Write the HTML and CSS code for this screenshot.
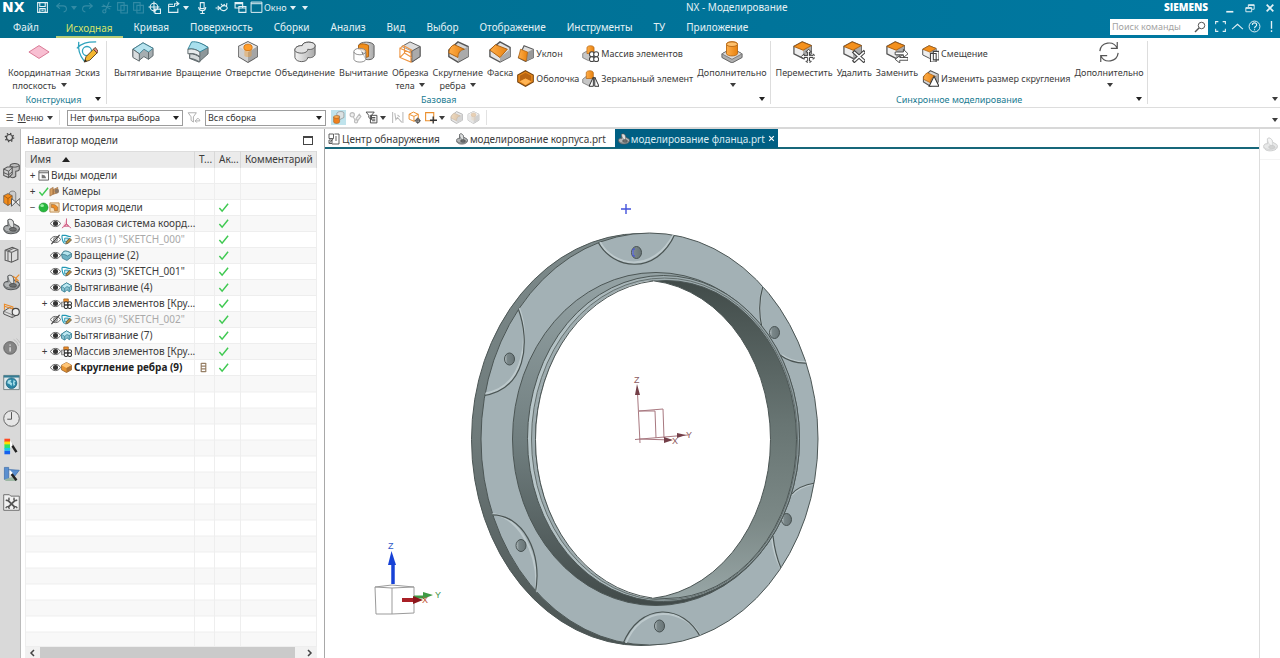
FILE: index.html
```html
<!DOCTYPE html>
<html lang="ru">
<head>
<meta charset="utf-8">
<title>NX - Моделирование</title>
<link rel="stylesheet" href="styles.css">
</head>
<body>
<svg class="sprite" aria-hidden="true">
  <linearGradient id="g-or" x1="0" x2="1"><stop offset="0" stop-color="#ffae4a"/><stop offset="1" stop-color="#e8820f"/></linearGradient>
  <linearGradient id="g-gr" x1="0" x2="1"><stop offset="0" stop-color="#f4f4f4"/><stop offset="1" stop-color="#a9a9a9"/></linearGradient>
  <symbol id="plane" viewBox="0 0 24 24"><path d="M1 12 12 5l11 7-11 7z" fill="#f8bfd2" stroke="#d5738f"/></symbol>
  <symbol id="sketch" viewBox="0 0 24 24"><path d="M1 8C6 2 12 1 22 1M3 1c-1 7 1 15 6 21" fill="none" stroke="#2fa3bd" stroke-width="1.4"/><circle cx="12" cy="11" r="5" fill="none" stroke="#2fa3bd" stroke-width="1.4"/><path d="m9 23 2-6 8-8 4 4-8 8z" fill="#f4b62f" stroke="#5b4320"/><path d="m19 9 2-2 3 4-1 2z" fill="#e88" stroke="#5b4320"/><path d="m9 23 1-3 2 2z" fill="#222"/></symbol>
  <symbol id="extrude" viewBox="0 0 24 24"><path d="M1 9 12 2l11 6v8l-5 4-5-3-5 4-7-4z" fill="#a5adb0" stroke="#596266"/><path d="M1 9 12 2l11 6-5 4-5-3-5 5z" fill="#b8e4ef" stroke="#3d7e90"/><path d="M1 9v9l7 4v-8z" fill="#d9dddf" stroke="#596266"/><path d="M18 12v8" stroke="#596266"/></symbol>
  <symbol id="revolve" viewBox="0 0 24 24"><path d="M5 2c6-1 12 1 18 5v7L13 23 3 19v-4l5-1z" fill="#8d979a" stroke="#566064"/><path d="M5 1c6-1 12 2 18 6l-9 5C10 9 5 8 1 9z" fill="#a8dfed" stroke="#2c7f96"/><path d="M1 9c5-1 9 0 13 3v5C10 14 6 13 1 14z" fill="#e7ebec" stroke="#566064"/><path d="M3 14c4 0 8 1 11 4v5c-3-2-7-4-11-4z" fill="#d4d9da" stroke="#566064"/></symbol>
  <symbol id="cube" viewBox="0 0 24 24"><path d="m12 1 10 5v11l-10 6-10-6V6z" fill="#eee" stroke="#5a5a5a" stroke-width="1.6"/><path class="cube-t" d="m12 1 10 5-10 6L2 6z"/><path class="cube-l" d="m2 6 10 6v11L2 17z"/><path class="cube-r" d="m22 6-10 6v11l10-6z"/></symbol>
  <symbol id="hole" viewBox="0 0 24 24"><use href="#cube"/><path d="M8 7v9c1 2 7 2 8 0V7z" fill="#f59a2b" opacity=".4"/><ellipse cx="12" cy="7" rx="4.500" ry="3.500" fill="#ff9d2a" stroke="#d47410"/></symbol>
  <symbol id="unite" viewBox="0 0 24 24"><path d="M9 5c0-5 14-5 14 0v9c0 3-4 5-8 4 0 6-13 6-14 0V10c0-3 3-5 8-5z" fill="url(#g-gr)" stroke="#555"/><path d="M9 5c0-5 14-5 14 0 0 3-4 5-8 4 0 6-14 5-14 1 0-3 3-5 8-5z" fill="#e2e2e2" stroke="#555"/></symbol>
  <symbol id="subtract" viewBox="0 0 24 24"><path d="M6 5c1-5 16-5 17 0v11c0 4-5 5-9 4z" fill="url(#g-gr)" stroke="#555"/><path d="M6 5c2-3 8-2 11 0v12l-3 1v-3c0-5-3-6-8-6z" fill="#f28f1c" stroke="#a85c0c"/><path d="M1 11c1-4 12-4 13 0v9c-1 4-12 4-13 0zM1 12c1 4 12 4 13 0" fill="#fff" fill-opacity=".65" stroke="#888"/></symbol>
  <symbol id="trim" viewBox="0 0 24 24"><path d="m12 1 11 5v11l-9 6V11L3 6z" fill="#ddd" stroke="#555"/><path d="M23 6v11l-9 6V11z" fill="#aaa" stroke="#555"/><path d="m1 8 12 5v10L1 18zM1 8l4-3 9 5-3 3M1 18l5-5 8 5M6 6v8" fill="#fff" fill-opacity=".35" stroke="#ee9440" stroke-width="1.200"/></symbol>
  <symbol id="blend" viewBox="0 0 24 24"><path d="m12 1 11 5v11l-11 6-10-6V10z" fill="#d5d5d5" stroke="#555" stroke-width="1.500"/><path d="m13 12 10-6v11l-11 6z" fill="#aaa"/><path d="M2 13C2 8 5 5 8 4l11 5c-5 1-7 4-7 9z" fill="url(#g-or)" stroke="#a85c0c"/></symbol>
  <symbol id="chamfer" viewBox="0 0 24 24"><path d="m12 1 11 6v10l-11 6-11-6v-7z" fill="#e2e2e2" stroke="#555" stroke-width="1.500"/><path d="m12 18 11-9v8l-11 6z" fill="#aaa"/><path d="m1 10 6-6 13 5-8 9z" fill="url(#g-or)" stroke="#a85c0c"/></symbol>
  <symbol id="draft" viewBox="0 0 24 24"><path d="m10 1 13 5v12l-11 5-10-5z" fill="#ddd" stroke="#555" stroke-width="1.500"/><path d="m15 10 8-4v12l-10 5z" fill="#999"/><path d="m5 6 10 4-2 13-11-5z" fill="url(#g-or)" stroke="#a85c0c"/></symbol>
  <symbol id="shell" viewBox="0 0 24 24"><path d="m12 1 11 6v10l-11 6-11-6V7z" fill="#e8891a" stroke="#764411" stroke-width="1.500"/><path d="m12 4 8 4v8l-8-4-8 4V8z" fill="#b96512"/><path d="m4 16 8-4 8 4-8 5z" fill="#ffb455"/></symbol>
  <symbol id="pattern" viewBox="0 0 24 24"><path d="M1 12l5-3h9v8l-6 5-8-4z" fill="#c6c6c6" stroke="#666"/><path d="M7 4c0-4 10-4 10 0v8H7z" fill="url(#g-or)" stroke="#b46413"/><g fill="#fff" stroke="#444" stroke-width="1.500"><circle cx="14" cy="13" r="3.500"/><circle cx="20" cy="13" r="3.500"/><circle cx="14" cy="20" r="3.500"/><circle cx="20" cy="20" r="3.500"/></g></symbol>
  <symbol id="mirror" viewBox="0 0 24 24"><path d="M1 13l5-4h9v8l-6 5-8-4z" fill="#c6c6c6" stroke="#666"/><path d="M6 4c0-4 10-4 10 0v8H6z" fill="url(#g-or)" stroke="#b46413"/><path d="m16 10-6 13h6zm2 0 6 13h-6z" fill="#fff" stroke="#333" stroke-width="1.400"/></symbol>
  <symbol id="boss" viewBox="0 0 24 24"><path d="m1 14 11-6 11 6v4l-11 6-11-6z" fill="#aeaeae" stroke="#5b5b5b"/><path d="m1 14 11-6 11 6-11 6z" fill="#dcdcdc" stroke="#777"/><path d="M6 3c1-3 11-3 12 0v11c-1 3-11 3-12 0z" fill="url(#g-or)" stroke="#b96a16"/><ellipse cx="12" cy="3.500" rx="6" ry="2.500" fill="#ffc06b" stroke="#b96a16"/></symbol>
  <symbol id="orbox" viewBox="0 0 24 24"><path d="m10 1 10 4v9l-9 5-10-5V6z" fill="#eee" stroke="#555" stroke-width="1.400"/><path d="m11 10 9-5v9l-9 5z" fill="#aaa"/><path d="m10 1 10 4-9 5L1 6z" fill="#f4911e" stroke="#a85c0c"/></symbol>
  <symbol id="move" viewBox="0 0 24 24"><use href="#orbox"/><path d="m17 9 3 3h-2v4h4v-2l3 3-3 3v-2h-4v4h2l-3 3-3-3h2v-4h-4v2l-3-3 3-3v2h4v-4h-2z" fill="#fff" stroke="#333"/></symbol>
  <symbol id="delete" viewBox="0 0 24 24"><use href="#orbox"/><path d="m11 11 13 12M24 11 11 23" stroke="#444" stroke-width="4"/><path d="m12 12 11 10M23 12 12 22" stroke="#fff" stroke-width="1.800"/></symbol>
  <symbol id="replace" viewBox="0 0 24 24"><use href="#orbox"/><path d="M10 12h9V9l5 5-5 4v-3h-9zM24 18h-9v-2l-5 4 5 4v-3h9z" fill="#fff" stroke="#444"/></symbol>
  <symbol id="offset" viewBox="0 0 24 24"><use href="#orbox"/><path d="M16 9h8v12h-8zM12 12h8v12h-8z" fill="#fff" stroke="#444" stroke-width="1.500"/></symbol>
  <symbol id="resize" viewBox="0 0 24 24"><use href="#blend"/><path d="m17 9-7 14h14z" fill="#fff" stroke="#333" stroke-width="1.500"/></symbol>
  <symbol id="refresh" viewBox="0 0 24 24"><path d="M2 11A10 10 0 0 1 21 8M22 13a10 10 0 0 1-19 3M21 1v7h-7M3 23v-7h7" fill="none" stroke="#555" stroke-width="1.300"/></symbol>
  <symbol id="part" viewBox="0 0 24 24"><path d="M7 3c3-3 8 0 8 5l7 4c3 4 0 9-8 10C7 23 1 20 1 15c0-3 3-5 6-4z" fill="#b1b4b5" stroke="#535658" stroke-width="1.500"/><path d="M7 3c3-3 8 0 8 5v6c-4 0-7-4-8-11z" fill="#dfe1e1" stroke="#535658"/><ellipse cx="14" cy="16" rx="5" ry="2.600" fill="#6d7071" stroke="#444"/><path d="M1 16c3 5 17 6 22-1" fill="none" stroke="#535658"/></symbol>
  <symbol id="asm" viewBox="0 0 24 24"><path d="M10 5c1-4 12-4 13 0v5c0 2-3 3-5 3v7c-2 3-7 3-8 0z" fill="#bdbdbd" stroke="#555" stroke-width="1.500"/><path d="m1 10 5-3h7v10l-5 5-7-3z" fill="#cfcfcf" stroke="#555" stroke-width="1.500"/><path d="m1 10 7 3 5-5M8 13v9M1 15l7 3 5-4M10 5c2 3 10 3 13 0" fill="none" stroke="#555" stroke-width="1.400"/></symbol>
  <symbol id="constraint" viewBox="0 0 24 24"><path d="M9 4c2-4 9-3 9 1v12H9z" fill="#ccc" stroke="#666"/><path d="m1 8 6-3 6 3v10l-6 4-6-4z" fill="#f18b1b" stroke="#555"/><path d="m1 8 6 4v10M7 12l6-4" fill="none" stroke="#944f0d"/><path d="m12 12 6 5-6 6zm12 0-6 5 6 6z" fill="#eee" stroke="#555" stroke-width="1.400"/></symbol>
  <symbol id="box3" viewBox="0 0 24 24"><path d="m3 6 10-4 8 3v14l-9 4-9-3z" fill="#ddd" stroke="#555" stroke-width="1.500"/><path d="m3 6 9 3 9-4M12 9v14M7 7l9-4M7 8v13" fill="none" stroke="#666" stroke-width="1.500"/></symbol>
  <symbol id="reuse" viewBox="0 0 24 24"><use href="#part"/><path d="m14 3 4 3 5-5M18 6l4 4M18 6v6" fill="none" stroke="#eb8b28" stroke-width="1.600"/></symbol>
  <symbol id="view" viewBox="0 0 24 24"><path d="m1 13 8-5 13 4v5l-9 5-12-5z" fill="#ddd" stroke="#555" stroke-width="1.400"/><path d="m1 13 12 5v4M13 18l9-6" fill="none" stroke="#666"/><path d="M2 11V3l12 4v5M2 6l12 4" fill="none" stroke="#eb8b28" stroke-width="1.500"/><circle cx="18" cy="14" r="5" fill="#eee" stroke="#444" stroke-width="1.600"/></symbol>
  <symbol id="info" viewBox="0 0 24 24"><circle cx="10" cy="14" r="9" fill="#858585" stroke="#555"/><path d="M10 9v2m0 2v6" stroke="#ddd" stroke-width="2"/><path d="M15 2a13 13 0 0 1 7 9M19 1a15 15 0 0 1 5 6" fill="none" stroke="#bbb" stroke-width="1.400"/></symbol>
  <symbol id="web" viewBox="0 0 24 24"><path d="M1 2h22v20H1z" fill="#dfe9ec" stroke="#566"/><path d="M1 2h22v3H1z" fill="#357c94"/><circle cx="12" cy="13" r="7.500" fill="#2b86a5" stroke="#155c76"/><path d="m7 9 4-1 1 2-2 1 3 2-1 4-3-3-3-1zm8-1 3 3-2 1 1 3-2 2-1-4z" fill="#a6dfe9"/></symbol>
  <symbol id="clock" viewBox="0 0 24 24"><circle cx="12" cy="12" r="11" fill="#e6e6e6" stroke="#666" stroke-width="1.400"/><path d="M12 3v10H6" fill="none" stroke="#555" stroke-width="1.400"/></symbol>
  <symbol id="palette" viewBox="0 0 24 24"><path d="M2 1h8v5H2z" fill="#ff4a22"/><path d="M2 5h8v5H2z" fill="#ffdf00"/><path d="M2 9h8v6H2z" fill="#2fe36a"/><path d="M2 14h8v4H2z" fill="#16c9ee"/><path d="M2 18h8v5H2z" fill="#1560ed"/><path d="m12 9 7 11" stroke="#222" stroke-width="3.500"/><path d="m10 3 4 7-4 4z" fill="#fff"/></symbol>
  <symbol id="scene" viewBox="0 0 24 24"><path d="M2 2h6v17H2zM8 5l15 1-7 9z" fill="#5a8fd0" stroke="#3c6ca8"/><path d="m2 19 12-4 6 6H4z" fill="#9db7a4"/><path d="m11 10 8 10" stroke="#222" stroke-width="3.500"/><path d="m9 5 5 5-4 3z" fill="#fff"/></symbol>
  <symbol id="tools" viewBox="0 0 24 24"><path d="M1 3V1h8l2 2h12v20H1z" fill="#f2f2f2" stroke="#666" stroke-width="1.300"/><path d="m7 9 10 10M17 9 7 19" stroke="#555" stroke-width="2.600"/><path d="M4 8c3 3 6 0 4-3M20 8c-3 3-6 0-4-3M4 20c1-3 4-3 5 1M20 20c-1-3-4-3-5 1" fill="none" stroke="#555" stroke-width="2"/></symbol>
  <symbol id="gear" viewBox="0 0 24 24"><circle cx="12" cy="12" r="6.500" fill="none" stroke="#444" stroke-width="2.500"/><circle cx="12" cy="12" r="9" fill="none" stroke="#444" stroke-width="3" stroke-dasharray="3 4.070"/></symbol>
  <symbol id="eye" viewBox="0 0 24 24"><path d="M1 12c5-9 17-9 22 0-5 9-17 9-22 0z" fill="#fff" stroke="#444" stroke-width="1.800"/><circle cx="12" cy="12" r="5.500" fill="#333"/></symbol>
  <symbol id="eye-off" viewBox="0 0 24 24"><path d="M1 12c5-9 17-9 22 0-5 9-17 9-22 0z" fill="none" stroke="#555" stroke-width="2"/><circle cx="12" cy="12" r="4" fill="none" stroke="#555" stroke-width="2"/><path d="M3 22 21 2" stroke="#444" stroke-width="2.500"/></symbol>
  <symbol id="csys" viewBox="0 0 24 24"><path d="M12 1v13L2 22m10-8 10 8M7 18l5-6 5 6z" fill="#f6cdd7" stroke="#ce5d83" stroke-width="2"/></symbol>
  <symbol id="mini-sketch" viewBox="0 0 24 24"><path d="M2 3h8M2 3c0 8 2 14 6 18M10 3c5 2 8 3 12 3" fill="none" stroke="#2298b4" stroke-width="2.500"/><path d="M8 9h8v8H8z" fill="#c9ecf2" stroke="#2298b4" stroke-width="2"/><path d="m10 22 2-6 7-7 4 4-7 7z" fill="#b98d38" stroke="#444" stroke-width="1.500"/></symbol>
  <symbol id="mini-revolve" viewBox="0 0 24 24"><path d="M6 3c6-2 12 1 17 5v7l-10 8-10-5-2-8z" fill="#6fb2c4" stroke="#2f6f81" stroke-width="1.500"/><path d="M6 3c6-2 12 1 17 5l-9 5C10 10 6 9 1 10z" fill="#b7e5ee" stroke="#2f6f81" stroke-width="1.500"/></symbol>
  <symbol id="mini-extrude" viewBox="0 0 24 24"><path d="M1 9 12 2l11 6v9l-5 4-5-4-5 5-7-4z" fill="#8cc3d1" stroke="#2f7c92" stroke-width="1.800"/><path d="M1 9 12 2l11 6-5 4-5-2-5 4z" fill="#bfe9f2" stroke="#2f7c92" stroke-width="1.500"/><path d="M8 14v8M18 12v9" stroke="#2f7c92" stroke-width="1.500"/></symbol>
  <symbol id="mini-pattern" viewBox="0 0 24 24"><path d="M6 2h10v9H6z" fill="#ef8f2c" stroke="#9c5614" stroke-width="1.500"/><path d="M1 9h8v10H1z" fill="#ccc" stroke="#666" stroke-width="1.500"/><g fill="#fff" stroke="#333" stroke-width="2.200"><circle cx="11" cy="12" r="4"/><circle cx="19" cy="12" r="4"/><circle cx="11" cy="19" r="4"/><circle cx="19" cy="19" r="4"/></g></symbol>
  <symbol id="tick" viewBox="0 0 24 24"><path d="m3 13 6 7L22 4" fill="none" stroke="#3fc951" stroke-width="3.200"/></symbol>
  <symbol id="views" viewBox="0 0 24 24"><path d="M2 2h21v20H2zM2 6h21" fill="#fff" stroke="#555" stroke-width="2"/><path d="M8 18v-8l7 2 3 6z" fill="#777"/></symbol>
  <symbol id="camera" viewBox="0 0 24 24"><path d="m2 7 7-4v15l-7 4zM9 8l10-5v12L9 18z" fill="#d9a162" stroke="#996b40" stroke-width="1.500"/><circle cx="17" cy="11" r="5" fill="#8c7867"/></symbol>
  <symbol id="history" viewBox="0 0 24 24"><path d="M2 2h20v20H2z" fill="#f8e1bd" stroke="#bc8a4b" stroke-width="2"/><path d="m5 5 8 1 6 5v8h-7l-1-6-6-1z" fill="#ee8d24" stroke="#7b5330"/></symbol>
  <symbol id="ball" viewBox="0 0 24 24"><circle cx="12" cy="12" r="10" fill="#27b83d" stroke="#168127"/><ellipse cx="9" cy="8" rx="4" ry="3" fill="#9cf3a4"/></symbol>
  <symbol id="orcube" viewBox="0 0 24 24"><path d="m12 1 11 6v10l-11 6-11-6V7z" fill="#e8942f" stroke="#8a551e" stroke-width="1.500"/><path d="m1 7 11 6 11-6-11-6z" fill="#ffc679"/><path d="M12 13v10l11-6V7z" fill="#ae7335"/></symbol>
  <symbol id="ladder" viewBox="0 0 24 24"><path d="M7 2v20M17 2v20M7 3h10M7 9h10M7 15h10M7 21h10" fill="none" stroke="#967f65" stroke-width="2.500"/></symbol>
  <symbol id="save" viewBox="0 0 24 24"><path d="M3 3h18v18H3zM7 3v7h10V3M7 21v-7h10v7M10 17h4" fill="none" stroke="currentColor" stroke-width="2"/></symbol>
  <symbol id="undo" viewBox="0 0 24 24"><path d="M9 4 3 9l6 5M3 9h12c8 0 8 11 1 11" fill="none" stroke="currentColor" stroke-width="2"/></symbol>
  <symbol id="redo" viewBox="0 0 24 24"><path d="m15 4 6 5-6 5M21 9H9C1 9 1 20 8 20" fill="none" stroke="currentColor" stroke-width="2"/></symbol>
  <symbol id="cut" viewBox="0 0 24 24"><path d="m17 2-7 15M3 10h18M5 7l14 8" fill="none" stroke="currentColor" stroke-width="2"/><circle cx="8" cy="19" r="3" fill="none" stroke="currentColor" stroke-width="2"/></symbol>
  <symbol id="copy" viewBox="0 0 24 24"><path d="M3 3h12v14H3zM9 8h12v14H9z" fill="none" stroke="currentColor" stroke-width="2"/></symbol>
  <symbol id="target" viewBox="0 0 24 24"><path d="M11 1v20M1 11h20M13 15h10v8H13z" fill="none" stroke="currentColor" stroke-width="2"/><circle cx="11" cy="11" r="7" fill="none" stroke="currentColor" stroke-width="2"/></symbol>
  <symbol id="share" viewBox="0 0 24 24"><path d="M3 6h8M3 6v15h17v-7M3 10h11M14 10V5h7m-4-4 5 4-5 4" fill="none" stroke="currentColor" stroke-width="2"/></symbol>
  <symbol id="mic" viewBox="0 0 24 24"><path d="M8 3h7v11H8zM5 11c0 9 13 9 13 0M12 18v5M8 23h8" fill="none" stroke="currentColor" stroke-width="2"/></symbol>
  <symbol id="spin" viewBox="0 0 24 24"><path d="M1 13h7M5 9l4 4-4 4M11 16c-4-6 8-10 11-5s-7 9-11 5zM11 5l3 4 4-3M22 4l-1 7" fill="none" stroke="currentColor" stroke-width="2"/></symbol>
  <symbol id="wins" viewBox="0 0 24 24"><path d="M2 3h14v10H2zM2 5h14M9 10h13v11H9zM9 13h13" fill="none" stroke="currentColor" stroke-width="2"/></symbol>
  <symbol id="win" viewBox="0 0 24 24"><path d="M2 2h20v19H2zM2 5h20" fill="none" stroke="currentColor" stroke-width="1.800"/></symbol>
  <symbol id="min" viewBox="0 0 24 24"><path d="M3 21h17" stroke="currentColor" stroke-width="4"/></symbol>
  <symbol id="restore" viewBox="0 0 24 24"><path d="M2 11h14v10H2zM8 10V4h14v11h-5M2 13h14M8 6h14" fill="none" stroke="currentColor" stroke-width="2.200"/></symbol>
  <symbol id="close" viewBox="0 0 24 24"><path d="m4 4 16 16M20 4 4 20" stroke="currentColor" stroke-width="4"/></symbol>
  <symbol id="lens" viewBox="0 0 24 24"><circle cx="15" cy="9" r="6.500" fill="none" stroke="#555" stroke-width="2"/><path d="m10 14-8 8" stroke="#555" stroke-width="3"/></symbol>
  <symbol id="full" viewBox="0 0 24 24"><path d="M3 8V3h5M16 3h5v5M21 16v5h-5M8 21H3v-5" fill="none" stroke="currentColor" stroke-width="2"/></symbol>
  <symbol id="up" viewBox="0 0 24 24"><path d="m2 17 10-9 10 9" fill="none" stroke="currentColor" stroke-width="2"/></symbol>
  <symbol id="help" viewBox="0 0 24 24"><circle cx="12" cy="12" r="10" fill="none" stroke="currentColor" stroke-width="1.800"/><path d="M8 9c0-5 8-5 8 0 0 3-4 3-4 6M12 17v2" fill="none" stroke="currentColor" stroke-width="2"/></symbol>
  <symbol id="bang" viewBox="0 0 24 24"><path d="M12 2v14M12 19v3" stroke="currentColor" stroke-width="2.500"/></symbol>
  <symbol id="funnel" viewBox="0 0 24 24"><path d="M2 3h14l-5 7v9l-4-3v-6zM14 17h8m-8 0 3-3m-3 3 3 3M22 17c0-4-3-4-5-4" fill="none" stroke="#aaa" stroke-width="1.600"/></symbol>
  <symbol id="solid" viewBox="0 0 24 24"><path d="M3 11h11v9c0 4-11 4-11 0z" fill="#f0801d" stroke="#9c5614"/><path d="M9 4c2-4 13-4 13 0v8l-8 4V9H9z" fill="#dce2e3" stroke="#777"/><ellipse cx="8.500" cy="11" rx="5.500" ry="2.500" fill="#ffb15a" stroke="#9c5614"/></symbol>
  <symbol id="chain" viewBox="0 0 24 24"><circle cx="6" cy="7" r="4" fill="#eee" stroke="#bbb" stroke-width="2"/><path d="m8 11 5 9M13 14l6-8 3 4-6 8z" fill="#eee" stroke="#bbb" stroke-width="2"/><circle cx="13" cy="19" r="3" fill="#eee" stroke="#bbb" stroke-width="2"/></symbol>
  <symbol id="filter" viewBox="0 0 24 24"><path d="M2 2h15l-5 6v8L7 12V8zM10 8h12v14H10zM13 12h6M13 15h6M13 18h6" fill="#fff" stroke="#444" stroke-width="1.700"/></symbol>
  <symbol id="arrowsel" viewBox="0 0 24 24"><path d="M3 2v20M22 2v20M7 4l2 12 3-4 8 9M12 7l4 4" fill="none" stroke="#bbb" stroke-width="2"/></symbol>
  <symbol id="boxsel" viewBox="0 0 24 24"><path d="m10 2 9 4v9l-8 4-9-4V6zM2 6l9 4 8-4M11 10v9" fill="#fff" stroke="#eb8e2b" stroke-width="1.800"/><circle cx="18" cy="18" r="3.500" fill="#eee" stroke="#555" stroke-width="2"/><path d="M18 12v12M12 18h12" stroke="#555" stroke-width="1.500"/></symbol>
  <symbol id="rectsel" viewBox="0 0 24 24"><path d="M3 3h15v15H3z" fill="#fff" stroke="#eb8e2b" stroke-width="2"/><path d="M17 10v13M11 17h13" stroke="#333" stroke-width="2.500"/></symbol>
  <symbol id="discover" viewBox="0 0 24 24"><path d="M2 2h9v9H2zM13 2h9v20H8" fill="#fff" stroke="#444" stroke-width="1.700"/><path d="m3 20 7-8M2 14h6v7H2zM16 6v10" fill="none" stroke="#444" stroke-width="1.700"/></symbol>
</svg>

<div class="app">
  <header class="top">
    <div class="titlebar">
      <strong class="nx">NX</strong>
      <div class="qat">
        <button aria-label="Сохранить"><svg><use href="#save"/></svg></button>
        <span class="dim gap"><button aria-label="Отменить"><svg><use href="#undo"/></svg></button><i class="caret"></i></span>
        <span class="dim"><button aria-label="Повторить"><svg><use href="#redo"/></svg></button></span>
        <span class="dim gap"><button aria-label="Вырезать"><svg><use href="#cut"/></svg></button><button aria-label="Копировать"><svg><use href="#copy"/></svg></button><button aria-label="Вставить"><svg><use href="#copy"/></svg></button></span>
        <button aria-label="Поворот"><svg><use href="#target"/></svg></button>
        <span class="gap"><button aria-label="Экспорт"><svg><use href="#share"/></svg></button><i class="caret"></i></span>
        <span class="gap"><button aria-label="Голос"><svg><use href="#mic"/></svg></button></span>
        <span class="gap"><button aria-label="Повтор команды"><svg><use href="#spin"/></svg></button></span>
        <span class="gap"><button aria-label="Переключить окно"><svg><use href="#wins"/></svg></button></span>
        <button class="window-btn"><svg><use href="#win"/></svg>Окно<i class="caret"></i></button>
        <i class="caret more"></i>
      </div>
      <div class="title">NX - Моделирование</div>
      <strong class="brand">SIEMENS</strong>
      <div class="winctl">
        <button aria-label="Свернуть"><svg><use href="#min"/></svg></button>
        <button aria-label="Восстановить"><svg><use href="#restore"/></svg></button>
        <button aria-label="Закрыть"><svg><use href="#close"/></svg></button>
      </div>
    </div>
    <nav class="menu">
      <a class="file" href="#">Файл</a><a class="active" href="#">Исходная</a><a href="#">Кривая</a><a href="#">Поверхность</a><a href="#">Сборки</a><a href="#">Анализ</a><a href="#">Вид</a><a href="#">Выбор</a><a href="#">Отображение</a><a href="#">Инструменты</a><a href="#">ТУ</a><a href="#">Приложение</a>
      <label class="search"><input type="text" placeholder="Поиск команды" aria-label="Поиск команды"><svg><use href="#lens"/></svg></label>
      <div class="menuctl">
        <button aria-label="Полный экран"><svg><use href="#full"/></svg></button>
        <button aria-label="Свернуть ленту"><svg><use href="#up"/></svg></button>
        <button aria-label="Справка"><svg><use href="#help"/></svg></button>
        <button aria-label="Уведомления"><svg><use href="#bang"/></svg></button>
      </div>
    </nav>
  </header>

  <section class="ribbon">
    <div class="group g1">
      <div class="tools">
        <button class="big"><svg><use href="#plane"/></svg>Координатная<span>плоскость <i class="caret"></i></span></button>
        <button class="big"><svg><use href="#sketch"/></svg>Эскиз</button>
      </div>
      <div class="gname">Конструкция<i class="caret"></i></div>
    </div>
    <div class="group g2">
      <div class="tools">
        <button class="big"><svg><use href="#extrude"/></svg>Вытягивание</button>
        <button class="big"><svg><use href="#revolve"/></svg>Вращение</button>
        <button class="big"><svg><use href="#hole"/></svg>Отверстие</button>
        <button class="big"><svg><use href="#unite"/></svg>Объединение</button>
        <button class="big"><svg><use href="#subtract"/></svg>Вычитание</button>
        <button class="big"><svg><use href="#trim"/></svg>Обрезка<span>тела <i class="caret"></i></span></button>
        <button class="big"><svg><use href="#blend"/></svg>Скругление<span>ребра <i class="caret"></i></span></button>
        <button class="big"><svg><use href="#chamfer"/></svg>Фаска</button>
        <div class="stack">
          <button class="small"><svg><use href="#draft"/></svg>Уклон</button>
          <button class="small"><svg><use href="#shell"/></svg>Оболочка</button>
        </div>
        <div class="stack">
          <button class="small"><svg><use href="#pattern"/></svg>Массив элементов</button>
          <button class="small"><svg><use href="#mirror"/></svg>Зеркальный элемент</button>
        </div>
        <button class="big wide"><svg><use href="#boss"/></svg>Дополнительно<span><i class="caret"></i></span></button>
      </div>
      <div class="gname">Базовая<i class="caret"></i></div>
    </div>
    <div class="group g3">
      <div class="tools">
        <button class="big"><svg><use href="#move"/></svg>Переместить</button>
        <button class="big"><svg><use href="#delete"/></svg>Удалить</button>
        <button class="big"><svg><use href="#replace"/></svg>Заменить</button>
        <div class="stack">
          <button class="small"><svg><use href="#offset"/></svg>Смещение</button>
          <button class="small"><svg><use href="#resize"/></svg>Изменить размер скругления</button>
        </div>
        <button class="big wide"><svg><use href="#refresh"/></svg>Дополнительно<span><i class="caret"></i></span></button>
      </div>
      <div class="gname">Синхронное моделирование<i class="caret"></i></div>
    </div>
    <div class="rest"><i class="caret"></i></div>
  </section>

  <div class="selbar">
    <button class="menubtn"><b class="burger">☰</b><span><u>М</u>еню</span><i class="caret"></i></button>
    <span class="drop f1"><select aria-label="Фильтр выбора"><option>Нет фильтра выбора</option></select><i class="caret"></i></span>
    <button aria-label="Сброс фильтра"><svg><use href="#funnel"/></svg></button>
    <span class="drop f2"><select aria-label="Область выбора"><option>Вся сборка</option></select><i class="caret"></i></span>
    <div class="seltools">
      <button class="on" aria-label="Тело"><svg><use href="#solid"/></svg></button>
      <button aria-label="Цепочка"><svg><use href="#chain"/></svg></button>
      <button class="dd" aria-label="Фильтр"><svg><use href="#filter"/></svg><i class="caret"></i></button>
      <button aria-label="Выделение"><svg><use href="#arrowsel"/></svg></button>
      <button aria-label="Грани"><svg><use href="#boxsel"/></svg></button>
      <button class="dd" aria-label="Рамка"><svg><use href="#rectsel"/></svg><i class="caret"></i></button>
      <button class="fade" aria-label="Скругления"><svg><use href="#blend"/></svg></button>
      <button class="fade" aria-label="Сечение"><svg><use href="#hole"/></svg></button>
    </div>
    <i class="caret end"></i>
  </div>

  <main class="work">
    <aside class="rail">
      <button class="gearbtn" aria-label="Настройки"><svg><use href="#gear"/></svg></button>
      <button aria-label="Сборка"><svg><use href="#asm"/></svg></button>
      <button aria-label="Ограничения"><svg><use href="#constraint"/></svg></button>
      <button class="cur" aria-label="Навигатор модели"><svg><use href="#part"/></svg></button>
      <button aria-label="Библиотека"><svg><use href="#box3"/></svg></button>
      <button aria-label="Повторное использование"><svg><use href="#reuse"/></svg></button>
      <button aria-label="Виды"><svg><use href="#view"/></svg></button>
      <button class="apart" aria-label="Инфо"><svg><use href="#info"/></svg></button>
      <button class="apart" aria-label="Браузер"><svg><use href="#web"/></svg></button>
      <button class="apart" aria-label="Журнал"><svg><use href="#clock"/></svg></button>
      <button aria-label="Материалы"><svg><use href="#palette"/></svg></button>
      <button aria-label="Сцены"><svg><use href="#scene"/></svg></button>
      <button aria-label="Инструменты"><svg><use href="#tools"/></svg></button>
    </aside>

    <section class="navigator">
      <h2>Навигатор модели<button aria-label="Развернуть"></button></h2>
      <table>
        <colgroup><col><col class="c-t"><col class="c-a"><col class="c-c"></colgroup>
        <thead><tr><th>Имя <i class="asc"></i></th><th>Т...</th><th>Ак...</th><th>Комментарий</th></tr></thead>
        <tbody>
          <tr><td><div class="n"><b>+</b><svg><use href="#views"/></svg>Виды модели</div></td><td></td><td></td><td></td></tr>
          <tr><td><div class="n"><b>+</b><svg><use href="#tick"/></svg><svg><use href="#camera"/></svg>Камеры</div></td><td></td><td></td><td></td></tr>
          <tr><td><div class="n"><b>−</b><svg><use href="#ball"/></svg><svg><use href="#history"/></svg>История модели</div></td><td></td><td><svg><use href="#tick"/></svg></td><td></td></tr>
          <tr><td><div class="n sub"><b></b><svg><use href="#eye"/></svg><svg><use href="#csys"/></svg>Базовая система коорд...</div></td><td></td><td><svg><use href="#tick"/></svg></td><td></td></tr>
          <tr><td><div class="n sub off"><b></b><svg><use href="#eye-off"/></svg><svg><use href="#mini-sketch"/></svg>Эскиз (1) "SKETCH_000"</div></td><td></td><td><svg><use href="#tick"/></svg></td><td></td></tr>
          <tr><td><div class="n sub"><b></b><svg><use href="#eye"/></svg><svg><use href="#mini-revolve"/></svg>Вращение (2)</div></td><td></td><td><svg><use href="#tick"/></svg></td><td></td></tr>
          <tr><td><div class="n sub"><b></b><svg><use href="#eye"/></svg><svg><use href="#mini-sketch"/></svg>Эскиз (3) "SKETCH_001"</div></td><td></td><td><svg><use href="#tick"/></svg></td><td></td></tr>
          <tr><td><div class="n sub"><b></b><svg><use href="#eye"/></svg><svg><use href="#mini-extrude"/></svg>Вытягивание (4)</div></td><td></td><td><svg><use href="#tick"/></svg></td><td></td></tr>
          <tr><td><div class="n sub"><b>+</b><svg><use href="#eye"/></svg><svg><use href="#mini-pattern"/></svg>Массив элементов [Кру...</div></td><td></td><td><svg><use href="#tick"/></svg></td><td></td></tr>
          <tr><td><div class="n sub off"><b></b><svg><use href="#eye-off"/></svg><svg><use href="#mini-sketch"/></svg>Эскиз (6) "SKETCH_002"</div></td><td></td><td><svg><use href="#tick"/></svg></td><td></td></tr>
          <tr><td><div class="n sub"><b></b><svg><use href="#eye"/></svg><svg><use href="#mini-extrude"/></svg>Вытягивание (7)</div></td><td></td><td><svg><use href="#tick"/></svg></td><td></td></tr>
          <tr><td><div class="n sub"><b>+</b><svg><use href="#eye"/></svg><svg><use href="#mini-pattern"/></svg>Массив элементов [Кру...</div></td><td></td><td><svg><use href="#tick"/></svg></td><td></td></tr>
          <tr><td><div class="n sub last"><b></b><svg><use href="#eye"/></svg><svg><use href="#orcube"/></svg>Скругление ребра (9)</div></td><td><svg><use href="#ladder"/></svg></td><td><svg><use href="#tick"/></svg></td><td></td></tr>
          <tr class="blank"><td></td><td></td><td></td><td></td></tr>
        </tbody>
      </table>
      <div class="hscroll">
        <svg viewBox="0 0 15 11"><path d="M9 3 6 6l3 3" fill="none" stroke="#444" stroke-width="1.500"/></svg>
        <div></div>
        <svg viewBox="0 0 15 11"><path d="m6 3 3 3-3 3" fill="none" stroke="#444" stroke-width="1.500"/></svg>
      </div>
    </section>

    <section class="stage">
      <nav class="tabs">
        <a class="t1" href="#"><svg><use href="#discover"/></svg>Центр обнаружения</a>
        <a class="t2" href="#"><svg><use href="#part"/></svg>моделирование корпуса.prt</a>
        <a class="t3" href="#"><svg><use href="#part"/></svg>моделирование фланца.prt<svg class="x"><use href="#close"/></svg></a>
      </nav>
      <div class="view">
        <svg viewBox="325 149 934 509" role="img" aria-label="Модель фланца">
          <defs>
            <linearGradient id="rim" x1="0" y1="0" x2="0" y2="1"><stop offset="0" stop-color="#7d8a8b"/><stop offset=".5" stop-color="#6e7a7a"/><stop offset="1" stop-color="#4a5352"/></linearGradient>
            <linearGradient id="rec" x1="0" y1="0" x2="0" y2="1"><stop offset="0" stop-color="#95a3a5"/><stop offset=".5" stop-color="#717f80"/><stop offset="1" stop-color="#414a49"/></linearGradient>
            <linearGradient id="wall" x1="0" y1="0" x2="0" y2="1"><stop offset="0" stop-color="#414b49"/><stop offset=".45" stop-color="#687573"/><stop offset=".75" stop-color="#7b8886"/><stop offset="1" stop-color="#98a6a6"/></linearGradient>
            <linearGradient id="lip" x1="0" y1="0" x2="1" y2="0"><stop offset="0" stop-color="#b9c7ca"/><stop offset=".3" stop-color="#a9b7ba"/><stop offset="1" stop-color="#8f9da0"/></linearGradient>
            <linearGradient id="bore" x1="0" x2="1"><stop offset="0" stop-color="#c0cacc"/><stop offset=".3" stop-color="#7a8789"/><stop offset="1" stop-color="#687476"/></linearGradient>
            <clipPath id="bore-clip"><ellipse cx="666" cy="439.500" rx="130.500" ry="160"/></clipPath>
            <clipPath id="face-clip"><ellipse cx="649.500" cy="439" rx="168.500" ry="206"/></clipPath>
          </defs>
          <ellipse cx="641" cy="439.500" rx="169.500" ry="206" fill="url(#rim)" stroke="#4c5655"/>
          <ellipse cx="649.500" cy="439" rx="168.500" ry="206" fill="#a3b1b5" stroke="#4c5655"/>
          <g clip-path="url(#face-clip)" fill="none">
            <g stroke="#bdc9cc" stroke-width="2"><path d="M600 242c13 25 53 32 74-8M519 308c10 25 8 80-36 86M488 514c28-2 52 37 48 80M763 286c-4 13-4 29-1 42M782 355q10 8 26 7M813 484q-15 3-21 11M772 538q2 18 9 30M625 645c16-42 60-38 76-8"/></g>
            <g stroke="#4a5453" stroke-width="1.200"><path d="M598 242c15 28 58 34 77-8M518 308c13 35 8 82-36 88M490 515c32-2 54 37 45 80M763 286c-4 13-4 29-1 42M780 355q12 9 28 8M815 483q-17 3-23 11M773 536q2 18 8 32M622 646c18-46 62-42 79-8"/></g>
          </g>
          <g fill="url(#bore)" stroke="#465050"><ellipse cx="636.500" cy="252.500" rx="5" ry="6"/><ellipse cx="509.500" cy="359" rx="5" ry="6"/><ellipse cx="774.500" cy="332.500" rx="5" ry="6"/><ellipse cx="786.500" cy="519.500" rx="5" ry="6"/><ellipse cx="521" cy="545.500" rx="5" ry="6"/><ellipse cx="659.500" cy="626" rx="5" ry="6"/></g>
          <path d="M635 249h-2v7h2" fill="none" stroke="#3c4be0"/>
          <ellipse cx="656" cy="439" rx="143.500" ry="166.500" fill="url(#rec)" stroke="#4c5655"/>
          <ellipse cx="663.500" cy="438.500" rx="136" ry="163" fill="url(#lip)" stroke="#4c5655"/>
          <ellipse cx="664.500" cy="439" rx="133" ry="161" fill="#9eacaf" stroke="#65706f"/>
          <ellipse cx="666" cy="439.500" rx="130.500" ry="159" fill="url(#wall)" stroke="#4c5655"/>
          <g clip-path="url(#bore-clip)"><ellipse cx="640.500" cy="439.500" rx="130" ry="159.500" fill="#fff" stroke="#4c5655"/></g>
          <path d="M535.500 439.500A130.500 159 0 0 1 653 281M535.500 439.500A130.500 159 0 0 0 652 598" fill="none" stroke="#4c5655"/>
          <path d="M626 204v10M621 209h10" stroke="#4453dc" stroke-width="1.400"/>
          <g fill="none" stroke="#a87880"><path d="M640 443 637.500 393M635 439.500 688 435M639 411l24-2 1 29M639 411h16l1 27M639 439l32 1"/></g>
          <path d="m637 384 3 11h-5zM686 435l-9-2v5zM673 440l-9-3v6z" fill="#743f48"/>
          <g class="axis"><text x="634" y="383">Z</text><text x="686" y="438">Y</text><text x="672" y="444">X</text></g>
          <path d="m375 587 17-2 22 2v26l-22 1h-16zM375 587l17 1 22-1M392 588v26" fill="#fff" stroke="#9b9b9b"/>
          <path d="M393 584v-21" stroke="#1742d6" stroke-width="3.500"/><path d="m391.500 551 4.500 14h-8z" fill="#1742d6"/>
          <path d="M414 597h10" stroke="#3f9a45" stroke-width="3"/><path d="m433 595-10-3v7z" fill="#3f9a45"/>
          <path d="M402 600h12" stroke="#a92026" stroke-width="4"/><path d="m423 600-10-4v8z" fill="#8c171c"/>
          <g class="axis"><text class="az" x="388" y="549">Z</text><text class="ay" x="435" y="598">Y</text><text class="ax" x="422" y="603">X</text></g>
        </svg>
      </div>
    </section>
    <aside class="edge"><button aria-label="Панель"><svg><use href="#part"/></svg></button></aside>
  </main>
</div>
</body>
</html>
```
FILE: styles.css
```css
* { box-sizing: border-box; }
body { margin: 0; font-family: "Noto Sans", "Open Sans", sans-serif; font-size: 10px; color: #3c3c3c; background: #fff; }
.sprite { position: absolute; width: 0; height: 0; }
.cube-t { fill: #e6e6e6; }
.cube-l { fill: #cfcfcf; }
.cube-r { fill: #a5a5a5; }
button { border: 0; padding: 0; background: none; font: inherit; color: inherit; display: flex; align-items: center; justify-content: center; }
a { color: inherit; text-decoration: none; }
svg { display: block; flex: none; }
.caret { display: inline-block; flex: none; width: 0; height: 0; border: 3px solid transparent; border-top: 4px solid currentColor; border-bottom: 0; }
.app { height: 100vh; display: flex; flex-direction: column; overflow: hidden; }

.top { background: linear-gradient(90deg, #006d8d, #00749a 60%, #0079a2); color: #e4f1f5; flex: none; }
.titlebar { height: 15px; display: flex; align-items: center; }
.nx { width: 34px; padding-left: 2px; font: bold 14px/15px "DejaVu Sans", sans-serif; color: #fff; }
.qat, .qat span, .winctl, .menuctl { display: flex; align-items: center; }
.qat svg { width: 13px; height: 13px; }
.qat button { width: 16px; }
.qat .gap { margin-left: 3px; }
.qat .dim { opacity: .22; }
.qat .caret { margin: 0 2px; }
.qat .window-btn { width: auto; padding-left: 2px; font-size: 9px; gap: 1px; }
.qat .more { margin-left: 4px; }
.title { flex: 1; text-align: center; line-height: 15px; }
.brand { font: 800 10px/15px "Open Sans", sans-serif; color: #fff; margin-right: 12px; }
.winctl button { width: 20px; }
.winctl svg { width: 10px; height: 10px; }
.menu { height: 23px; display: flex; align-items: center; }
.menu a { height: 23px; padding: 3px 10px 0 11px; line-height: 19px; }
.menu a.file { padding: 3px 17px 0 13px; }
.menu a.active { color: #d5e069; border-bottom: 2px solid #b9cc76; height: 22px; padding: 3px 10px 0; }
.search { margin-left: auto; width: 98px; height: 16px; display: flex; align-items: center; background: #fff; padding: 0 2px; }
.search input { flex: 1; min-width: 0; border: 0; padding: 0; background: none; font: 9px/14px "Noto Sans", sans-serif; }
.search input::placeholder { color: #a3a3a3; }
.search svg { width: 12px; height: 12px; }
.menuctl { padding-left: 4px; }
.menuctl button { width: 17px; }
.menuctl svg { width: 13px; height: 13px; }

.ribbon { display: flex; height: 70px; flex: none; border-bottom: 1px solid #ddd; font-size: 9px; }
.group { display: flex; flex-direction: column; justify-content: space-between; padding-top: 3px; position: relative; }
.group::after { content: ""; position: absolute; right: 0; top: 3px; bottom: 3px; border-right: 1px solid #ddd; }
.tools { display: flex; }
.g1 .tools { padding: 0 5px 0 6px; }
.g2 .tools { padding: 0 1px 0 5px; }
.g3 .tools { padding: 0 1px 0 3px; }
.big { flex-direction: column; justify-content: flex-start; padding: 0 2px; line-height: 13px; white-space: nowrap; }
.big svg { width: 22px; height: 22px; margin-bottom: 3px; }
.big.wide { padding: 0 3px; }
.big .caret { margin: 0 0 2px 2px; }
.stack { display: flex; flex-direction: column; padding-left: 2px; }
.small { height: 25px; gap: 2px; justify-content: flex-start; padding-right: 1px; white-space: nowrap; }
.small svg { width: 17px; height: 17px; }
.gname { height: 14px; line-height: 14px; text-align: center; color: #207b91; position: relative; }
.gname .caret { position: absolute; right: 6px; top: 4px; color: #222; }
.rest { flex: 1; display: flex; align-items: flex-end; justify-content: flex-end; padding: 0 2px 6px; }

.selbar { height: 21px; flex: none; display: flex; align-items: center; border-bottom: 2px solid #d8d8d8; font-size: 9px; }
.menubtn { width: 60px; gap: 4px; margin-right: 7px; border-right: 1px solid #ddd; height: 15px; }
.burger { font: 9px/10px "DejaVu Sans", sans-serif; }
.drop { display: flex; align-items: center; height: 16px; border: 1px solid #9c9c9c; padding-right: 3px; color: #222; }
.drop select { flex: 1; min-width: 0; appearance: none; border: 0; padding: 0 0 0 2px; background: none; font: 9px/14px "Noto Sans", sans-serif; color: #333; }
.f1 { width: 116px; }
.f2 { width: 121px; }
.selbar > button svg { width: 14px; height: 14px; margin: 0 4px; }
.seltools { display: flex; align-items: center; padding-left: 5px; gap: 2px; border-right: 1px solid #e2e2e2; padding-right: 5px; }
.seltools svg { width: 13px; height: 13px; }
.seltools button { height: 15px; min-width: 15px; }
.seltools .dd { gap: 2px; padding-right: 2px; }
.seltools .on { background: #bfe3ec; }
.seltools .fade { opacity: .5; filter: saturate(.5); }
.selbar .end { margin: 4px 2px 0 auto; }

.work { flex: 1; min-height: 0; display: flex; }
.rail { width: 21px; flex: none; background: #d9d9d9; border-right: 1px solid #bbb; }
.rail button { width: 21px; height: 28px; padding-left: 1px; }
.rail svg { width: 17px; height: 17px; }
.rail .gearbtn { height: 17px; margin-bottom: 10px; padding: 0 2px 0 0; }
.rail .gearbtn svg { width: 11px; height: 11px; }
.rail .cur { background: #fff; }
.rail .apart { margin-top: 8px; }
.navigator { width: 304px; flex: none; padding: 0 7px 0 4px; display: flex; flex-direction: column; border-right: 1px solid #a8a8a8; }
h2 { margin: 0; height: 22px; font-size: 10px; font-weight: normal; line-height: 22px; padding: 0 4px 0 2px; display: flex; align-items: center; justify-content: space-between; }
h2 button { width: 10px; height: 9px; border: 1px solid #444; border-top-width: 2px; }
table { width: 100%; flex: 1; border-collapse: collapse; table-layout: fixed; border: 1px solid #ddd; border-bottom: 0; }
.c-t { width: 20px; }
.c-a { width: 26px; }
.c-c { width: 76px; }
th { height: 16px; padding: 0 4px; font-weight: normal; text-align: left; background: #ebebeb; border-right: 1px solid #d8d8d8; line-height: 15px; white-space: nowrap; }
td { height: 16px; padding: 0; border: 1px solid #eee; line-height: 15px; }
tr:nth-child(even) td { background: #f8f8f8; }
.asc { display: inline-block; margin: 0 0 1px 8px; border: 4px solid transparent; border-bottom: 5px solid #222; border-top: 0; }
td svg { width: 11px; height: 11px; margin: 0 3px; }
.n { display: flex; align-items: center; white-space: nowrap; padding-left: 1px; height: 15px; }
.n svg { margin: 0; }
.n b { width: 11px; flex: none; text-align: center; font-weight: normal; }
.n svg:last-of-type { margin-right: 2px; }
.sub { padding-left: 13px; }
.off { color: #a9a9a9; }
.last { font-weight: bold; color: #222; }
tr.blank td { height: auto; background: repeating-linear-gradient(#f8f8f8 0 15px, #eee 15px 16px, #fff 16px 31px, #eee 31px 32px); }
.hscroll { height: 11px; flex: none; display: flex; background: #f1f1f1; }
.hscroll svg { width: 15px; height: 11px; }
.hscroll div { flex: 1; background: #cacaca; margin-right: 7px; }

.stage { flex: 1; min-width: 0; display: flex; flex-direction: column; }
.tabs { height: 20px; flex: none; display: flex; border-bottom: 2px solid #17677a; }
.tabs a { display: flex; align-items: center; gap: 2px; height: 19px; white-space: nowrap; }
.tabs svg { width: 12px; height: 12px; }
.t1 { padding: 0 12px 0 3px; }
.t2 { padding: 0 9px 0 4px; }
.tabs .t3 { background: #005f83; color: #d9ebf2; padding: 0 3px; gap: 1px; }
.tabs .x { width: 7px; height: 7px; margin-left: 2px; color: #fff; }
.view { flex: 1; min-height: 0; }
.view svg { width: 100%; height: 100%; }
.axis { font: 9px "Liberation Sans", sans-serif; fill: #8d5a60; }
.az { fill: #3158c8; }
.ay { fill: #3e9446; }
.ax { fill: #c0522f; }
.edge { width: 21px; flex: none; border-left: 1px solid #ddd; }
.edge button { width: 20px; height: 31px; border-bottom: 1px solid #ddd; opacity: .3; }
.edge svg { width: 15px; height: 15px; }
```
